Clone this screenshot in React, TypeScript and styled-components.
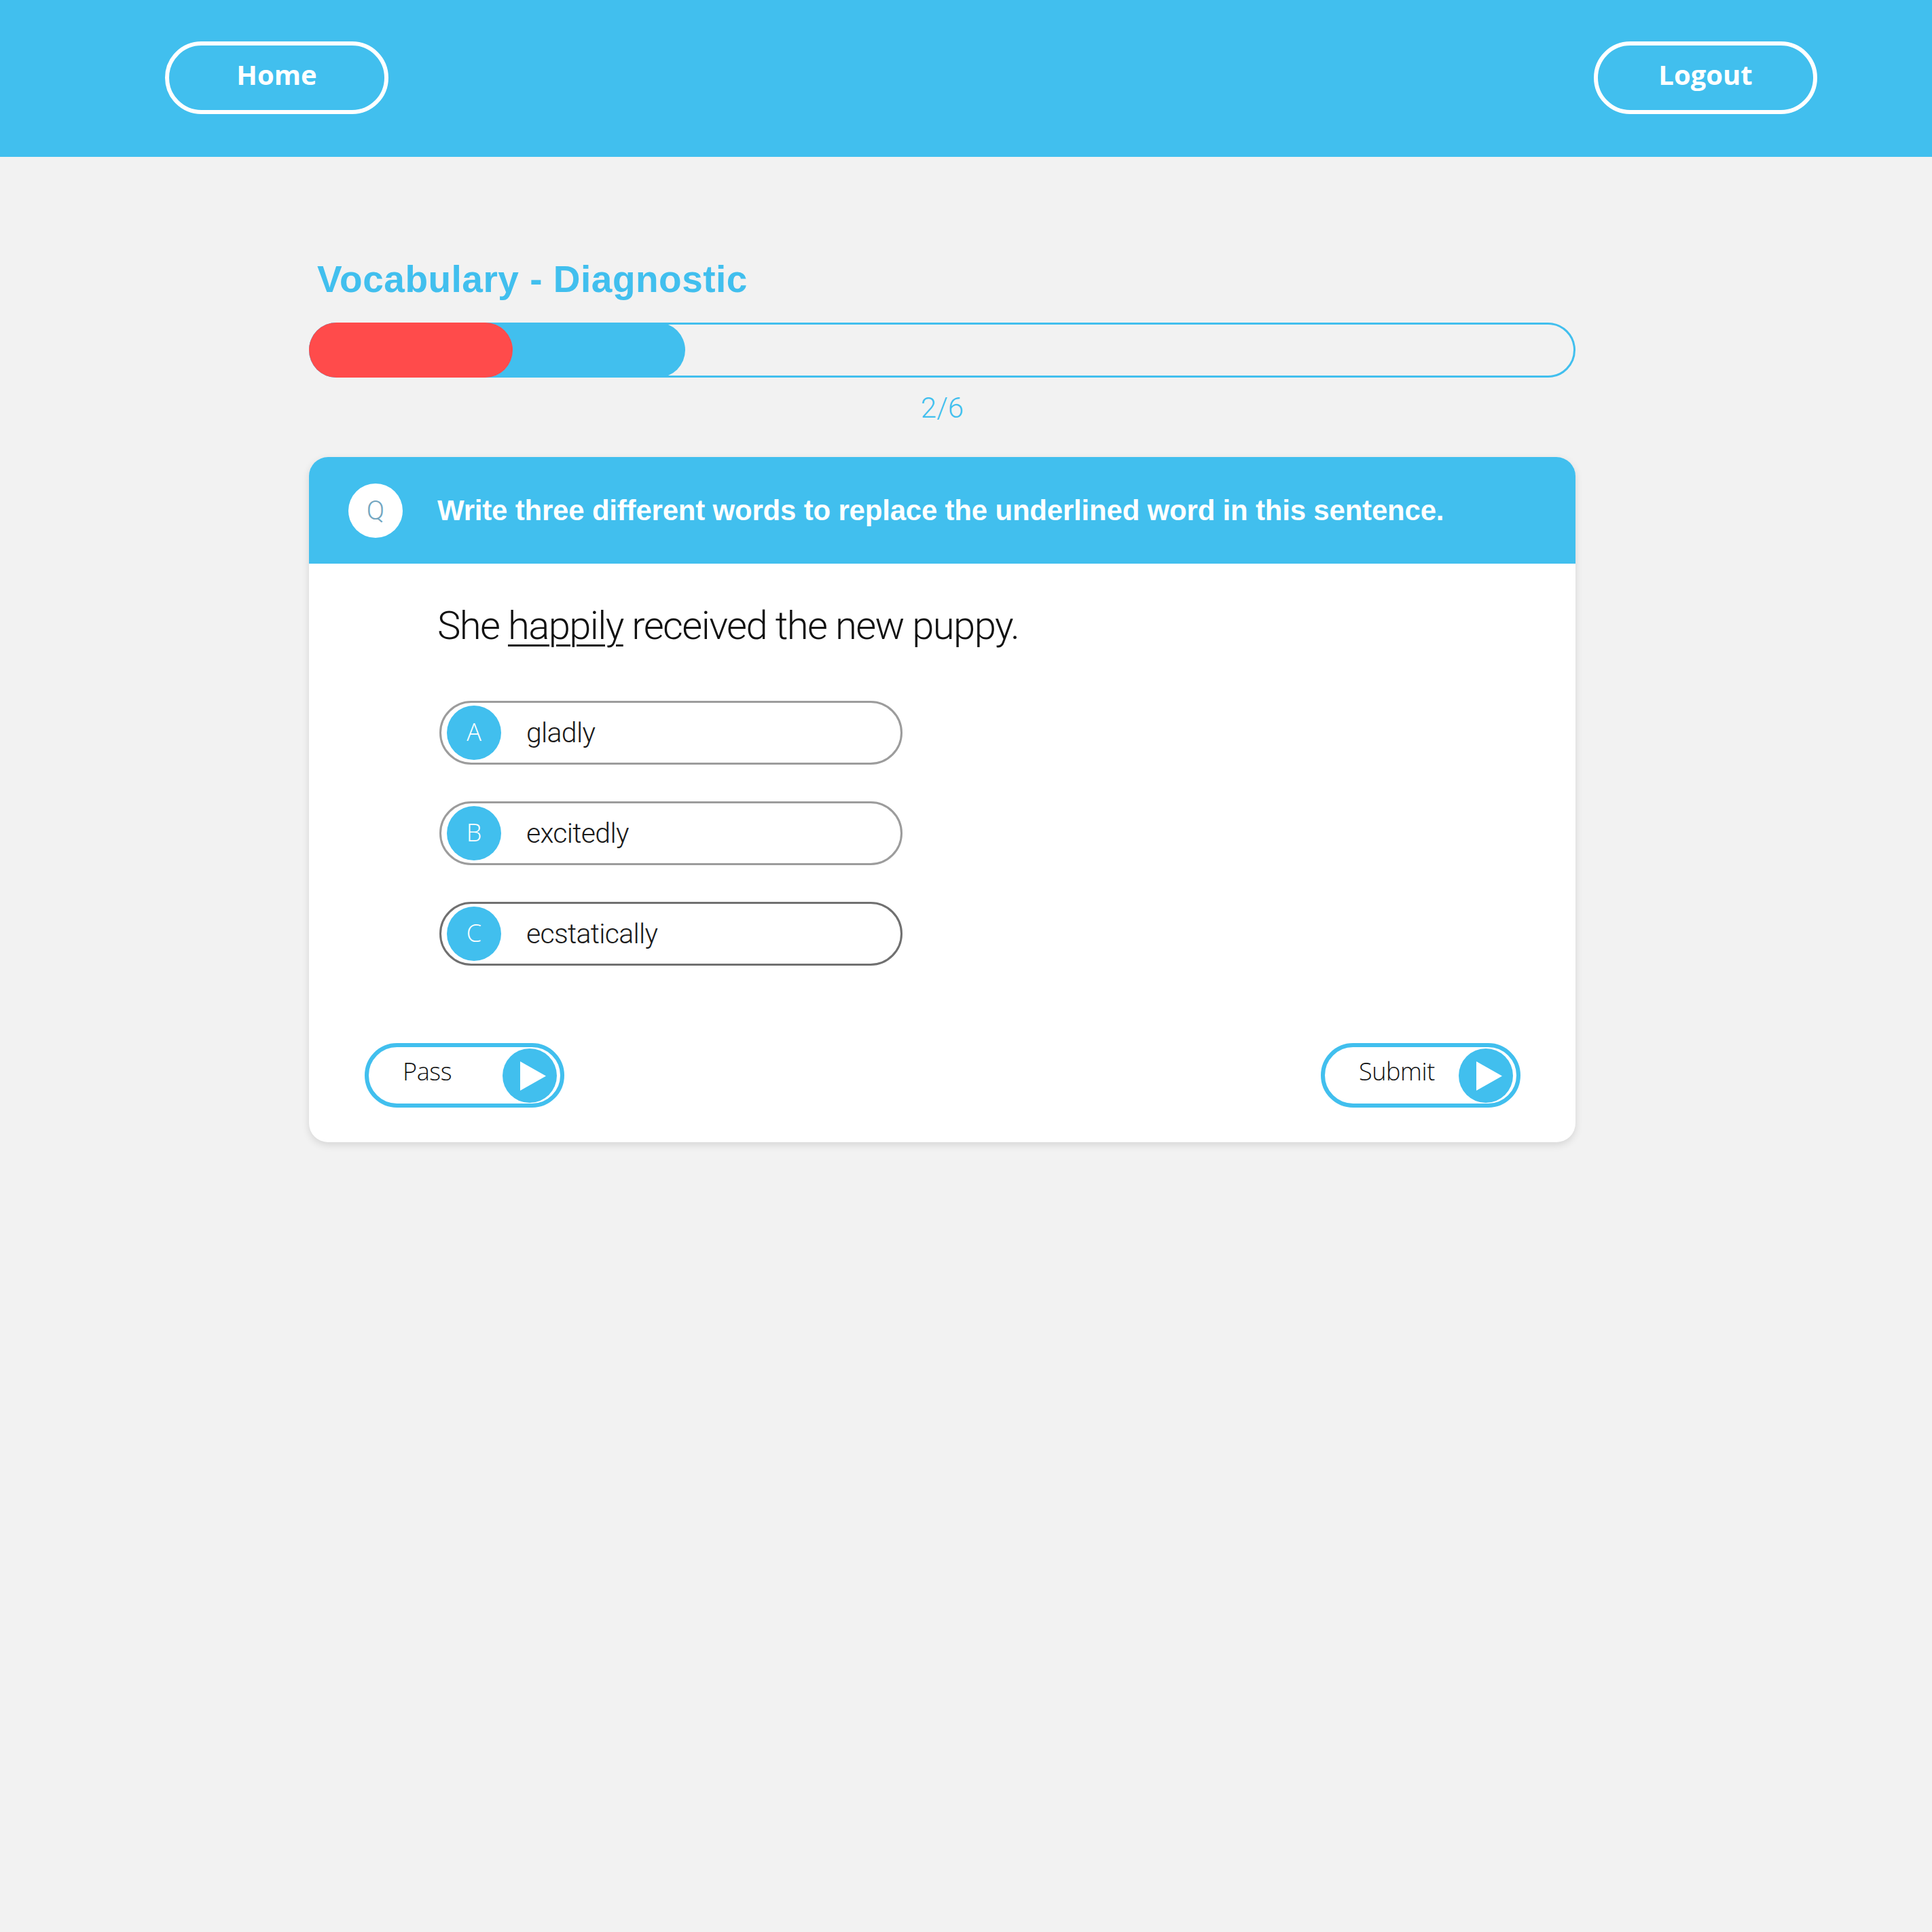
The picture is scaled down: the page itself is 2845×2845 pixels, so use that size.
import React from "react";
import styled, { createGlobalStyle } from "styled-components";

const BLUE = "#41bfee";

const Global = createGlobalStyle`
  html, body {
    margin: 0;
    padding: 0;
    background: #f2f2f2;
  }
  * { box-sizing: border-box; }
`;

const Page = styled.div`
  width: 2845px;
  min-height: 2845px;
  background: #f2f2f2;
`;

const TopBar = styled.header`
  height: 231px;
  background: ${BLUE};
  display: flex;
  align-items: center;
  justify-content: space-between;
  padding: 0 169px 0 243px;
`;

const NavButton = styled.button`
  width: 329px;
  height: 107px;
  margin-top: -3px;
  border: 6px solid #ffffff;
  border-radius: 54px;
  background: transparent;
  color: #ffffff;
  font-family: "Open Sans", "Liberation Sans", sans-serif;
  font-weight: 700;
  font-size: 40px;
  padding: 0 0 9px 0;
  display: flex;
  align-items: center;
  justify-content: center;
  cursor: pointer;
`;

const Main = styled.main`
  width: 1865px;
  margin-left: 455px;
  padding-top: 148px;
  display: flex;
  flex-direction: column;
`;

const Title = styled.h1`
  margin: 0 0 0 12px;
  font-family: "Liberation Sans", Arial, sans-serif;
  font-weight: 700;
  font-size: 55px;
  line-height: 64px;
  color: ${BLUE};
  letter-spacing: 0.5px;
`;

const Track = styled.div`
  margin-top: 32px;
  height: 81px;
  border: 3px solid ${BLUE};
  border-radius: 41px;
  background: #f2f2f2;
  position: relative;
`;

const Fill = styled.div<{ $color: string }>`
  position: absolute;
  top: -3px;
  bottom: -3px;
  left: -3px;
  border-radius: 41px;
  background: ${(p) => p.$color};
`;

const Count = styled.div`
  margin-top: 20px;
  text-align: center;
  font-family: Roboto, "Liberation Sans", sans-serif;
  font-weight: 300;
  font-size: 42px;
  line-height: 50px;
  color: ${BLUE};
`;

const Card = styled.section`
  margin-top: 47px;
  background: #ffffff;
  border-radius: 28px;
  overflow: hidden;
  box-shadow: 0 4px 12px rgba(0, 0, 0, 0.12);
  display: flex;
  flex-direction: column;
`;

const CardHeader = styled.div`
  height: 157px;
  background: ${BLUE};
  display: flex;
  align-items: center;
  padding-left: 58px;
  gap: 51px;
`;

const QBadge = styled.div`
  width: 80px;
  height: 80px;
  border-radius: 50%;
  background: #ffffff;
  display: flex;
  align-items: center;
  justify-content: center;
  font-family: Roboto, "Liberation Sans", sans-serif;
  font-weight: 300;
  font-size: 39px;
  color: #73a6bf;
  flex-shrink: 0;
`;

const Prompt = styled.h2`
  margin: 0;
  font-family: "Liberation Sans", Arial, sans-serif;
  font-weight: 700;
  font-size: 42px;
  color: #ffffff;
  letter-spacing: -0.2px;
`;

const Body = styled.div`
  padding: 57px 81px 51px 189px;
  display: flex;
  flex-direction: column;
`;

const Sentence = styled.p`
  margin: 0;
  font-family: Roboto, "Liberation Sans", sans-serif;
  font-weight: 300;
  font-size: 58px;
  line-height: 68px;
  letter-spacing: -1.6px;
  color: #111111;
`;

const Underlined = styled.span`
  text-decoration: underline;
  text-decoration-thickness: 3px;
  text-underline-offset: 8px;
`;

const Options = styled.div`
  margin-top: 77px;
  margin-left: 3px;
  display: flex;
  flex-direction: column;
  gap: 54px;
`;

const Option = styled.div<{ $active?: boolean }>`
  width: 682px;
  height: 94px;
  border: 3px solid ${(p) => (p.$active ? "#707070" : "#9c9c9c")};
  border-radius: 47px;
  display: flex;
  align-items: center;
  padding-left: 8px;
  gap: 37px;
  background: #ffffff;
`;

const Letter = styled.div`
  width: 80px;
  height: 80px;
  border-radius: 50%;
  background: ${BLUE};
  color: #ffffff;
  display: flex;
  align-items: center;
  justify-content: center;
  font-family: "Open Sans", "Liberation Sans", sans-serif;
  font-weight: 300;
  font-size: 36px;
  padding-bottom: 4px;
  flex-shrink: 0;
`;

const OptionText = styled.span`
  font-family: Roboto, "Liberation Sans", sans-serif;
  font-weight: 300;
  font-size: 41px;
  letter-spacing: -0.7px;
  color: #1a1a1a;
`;

const Actions = styled.div`
  margin-top: 114px;
  margin-left: -107px;
  display: flex;
  justify-content: space-between;
`;

const ActionButton = styled.button`
  width: 294px;
  height: 95px;
  border: 6px solid ${BLUE};
  border-radius: 48px;
  background: #ffffff;
  display: flex;
  align-items: center;
  padding: 0 5px 0 50px;
  cursor: pointer;
`;

const ActionLabel = styled.span`
  flex: 1;
  text-align: left;
  font-family: "Open Sans", "Liberation Sans", sans-serif;
  font-weight: 300;
  font-size: 36px;
  letter-spacing: -0.4px;
  color: #111111;
  padding-bottom: 12px;
`;

const PlayIcon = () => (
  <svg width="80" height="80" viewBox="0 0 80 80">
    <circle cx="40" cy="40" r="40" fill={BLUE} />
    <polygon points="26,19 64,40.5 26,62" fill="#ffffff" />
  </svg>
);

const options = [
  { letter: "A", text: "gladly" },
  { letter: "B", text: "excitedly" },
  { letter: "C", text: "ecstatically", active: true },
];

export default function App() {
  const total = 6;
  const current = 2;
  return (
    <Page>
      <Global />
      <TopBar>
        <NavButton>Home</NavButton>
        <NavButton>Logout</NavButton>
      </TopBar>
      <Main>
        <Title>Vocabulary - Diagnostic</Title>
        <Track>
          <Fill $color={BLUE} style={{ width: 554 }} />
          <Fill $color="#ff4b4b" style={{ width: 300 }} />
        </Track>
        <Count>
          {current}/{total}
        </Count>
        <Card>
          <CardHeader>
            <QBadge>Q</QBadge>
            <Prompt>Write three different words to replace the underlined word in this sentence.</Prompt>
          </CardHeader>
          <Body>
            <Sentence>
              She <Underlined>happily</Underlined> received the new puppy.
            </Sentence>
            <Options>
              {options.map((o) => (
                <Option key={o.letter} $active={o.active}>
                  <Letter>{o.letter}</Letter>
                  <OptionText>{o.text}</OptionText>
                </Option>
              ))}
            </Options>
            <Actions>
              <ActionButton>
                <ActionLabel>Pass</ActionLabel>
                <PlayIcon />
              </ActionButton>
              <ActionButton>
                <ActionLabel>Submit</ActionLabel>
                <PlayIcon />
              </ActionButton>
            </Actions>
          </Body>
        </Card>
      </Main>
    </Page>
  );
}
